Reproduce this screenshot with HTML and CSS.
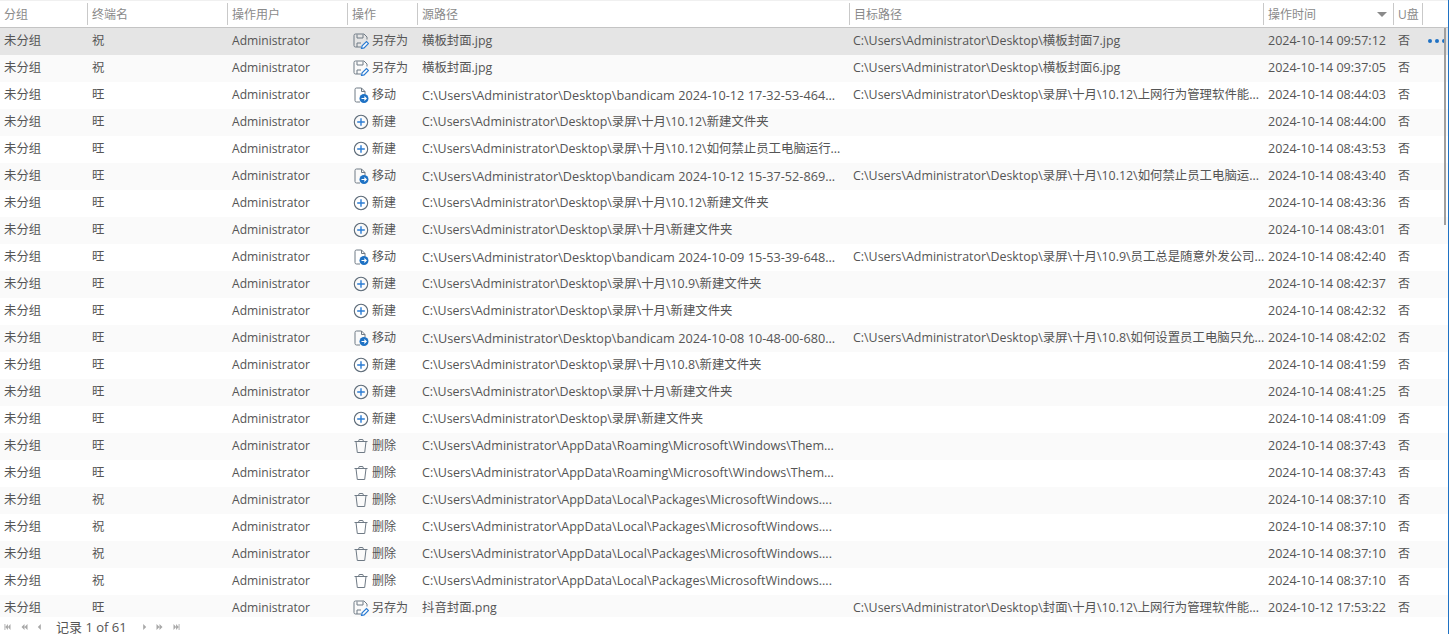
FILE: index.html
```html
<!DOCTYPE html>
<html lang="zh-CN">
<head>
<meta charset="utf-8">
<title>文件操作记录</title>
<link rel="stylesheet" href="styles.css">
</head>
<body>
<svg class="defs" width="0" height="0" aria-hidden="true">
  <symbol id="i-save" viewBox="0 0 16 16">
    <path d="M8 14H2.500A1.500 1.500 0 0 1 1 12.500V2.500A1.500 1.500 0 0 1 2.500 1H11l3 3v2.500" fill="none" stroke="#6f7a85" stroke-width="1"/>
    <path d="M4 1.500V5h6V1.500M4 14v-4h4" fill="none" stroke="#6f7a85" stroke-width="1"/>
    <path d="M8.500 15.500l.6-2.600L13.500 8.500l2 2-4.400 4.400z" fill="#fff" stroke="#2b7cd3" stroke-width="1.200"/>
  </symbol>
  <symbol id="i-move" viewBox="0 0 16 16">
    <path d="M7 15H3.500A1.500 1.500 0 0 1 2 13.500V2.500A1.500 1.500 0 0 1 3.500 1H8.500L12 4.500V7" fill="none" stroke="#6f7a85"/>
    <path d="M8.500 1v3.500H12" fill="none" stroke="#6f7a85"/>
    <circle cx="11" cy="11.500" r="4.500" fill="#1f72c4"/>
    <path d="M8.500 11.500h4.500M11.300 9.700l1.900 1.800-1.900 1.800" fill="none" stroke="#fff" stroke-width="1.100"/>
  </symbol>
  <symbol id="i-new" viewBox="0 0 16 16">
    <circle cx="8" cy="8" r="6.700" fill="none" stroke="#5d6b78" stroke-width="1.100"/>
    <path d="M8 4.200v7.600M4.200 8h7.600" stroke="#2b7cd3" stroke-width="1.400"/>
  </symbol>
  <symbol id="i-del" viewBox="0 0 16 16">
    <path d="M1.500 3.500h13M5.500 3.500l.7-2h3.600l.7 2" fill="none" stroke="#6f7a85"/>
    <path d="M3 3.500l1.300 11h7.400l1.300-11" fill="none" stroke="#6f7a85"/>
  </symbol>
</svg>
<main class="grid">
  <div class="row head">
    <div class="c c1">分组</div><div class="c c2">终端名</div><div class="c c3">操作用户</div><div class="c c4">操作</div><div class="c c5">源路径</div><div class="c c6">目标路径</div><div class="c c7">操作时间<span class="sort"></span></div><div class="c c8">U盘</div>
  </div>
  <div id="rows"></div>
  <div class="pager">
    <span class="nav"><svg class="pg" viewBox="0 0 9 7"><path d="M1 0h1v7H1zM8 0v7L5 3.500zM5 0v7L2 3.500z"/></svg><svg class="pg" viewBox="0 0 9 7"><path d="M8 0v7L4.500 3.500zM4.500 0v7L1 3.500z"/></svg><svg class="pg one" viewBox="0 0 5 7"><path d="M4 0v7L.500 3.500z"/></svg></span>
    <span class="rec">记录 1 of 61</span>
    <span class="nav"><svg class="pg one" viewBox="0 0 5 7"><path d="M1 0v7l3.500-3.500z"/></svg><svg class="pg" viewBox="0 0 9 7"><path d="M1 0v7l3.500-3.500zM4.500 0v7L8 3.500z"/></svg><svg class="pg" viewBox="0 0 9 7"><path d="M7 0h1v7H7zM1 0v7l3-3.500zM4 0v7l3-3.500z"/></svg></span>
  </div>
  <div class="more"><i></i><i></i><i></i></div>
  <div class="thumb"></div>
  <div class="edge"></div>
</main>
<script src="app.js"></script>
</body>
</html>
```
FILE: styles.css
```css
* { box-sizing: border-box; }
html, body { margin: 0; padding: 0; height: 100%; overflow: hidden; background: #fff; }
body { font: 12.4px/26px "Open Sans", "Noto Sans CJK SC", sans-serif; color: #555; }
.defs { position: absolute; }
.grid { position: relative; height: 634px; overflow: hidden; }
.row { display: flex; height: 27px; }
.row:nth-child(even) { background: #fafafa; }
.row.sel { background: #e5e5e5; }
.c { flex: none; padding-left: 4px; white-space: nowrap; }
.c1 { width: 88px; }
.c2 { width: 140px; }
.c3 { width: 120px; font-size: 12.1px; }
.c4 { width: 70px; padding-left: 5px; padding-bottom: 1px; display: flex; align-items: center; gap: 3px; font-size: 12px; }
.c5 { width: 432px; }
.op-m .c5 { font-size: 12.7px; }
.op-d .c5 { font-size: 12.55px; }
.c6 { width: 414px; padding-left: 3px; }
.c7 { width: 130px; font-size: 12.500px; }
.c8 { width: 30px; font-size: 12px; }
.head { height: 28px; background: #fff; border-top: 1px solid #f0f0f0; border-bottom: 1px solid #c4c4c4; color: #8a8a8a; padding-top: 2px; line-height: 24px; }
.head .c { height: 22px; border-left: 1px solid #c9c9c9; display: block; padding-left: 4px; font-size: 12px; }
.head .c1 { width: 87px; border-left: 0; }
.head .c6 { padding-left: 4px; }
.head .c8 { border-right: 1px solid #c9c9c9; }
.head .c7 { position: relative; }
.sort { position: absolute; right: 6px; top: 9px; border: 5px solid transparent; border-top: 5px solid #8a8a8a; border-bottom: 0; }
.ico { width: 16px; height: 16px; flex: none; }
.pager { position: relative; height: 17px; margin-top: -5px; padding: 3px 0 0 3px; display: flex; align-items: center; background: #fff; line-height: 14px; color: #555; font-size: 13px; }
.nav { display: flex; align-items: center; gap: 8px; }
.pg { height: 6px; width: 9px; fill: #a8a8a8; }
.pg.one { width: 5px; }
.rec { margin: 0 15px 0 14px; }
.more { position: absolute; left: 1428px; top: 39px; display: flex; gap: 3px; }
.more i { width: 4px; height: 4px; border-radius: 50%; background: #1f72c4; }
.thumb { position: absolute; left: 1444px; top: 28px; width: 2px; height: 197px; background: #a0a0a0; }
.edge { position: absolute; left: 1448px; top: 0; width: 1px; height: 634px; background: #1f72c4; }
```
FILE: app.js
```js
const A='C:\\Users\\Administrator\\Desktop\\', R=A+'录屏\\十月\\', P='C:\\Users\\Administrator\\AppData\\';
const O={s:['i-save','另存为'],m:['i-move','移动'],n:['i-new','新建'],d:['i-del','删除']};
const T=P+'Roaming\\Microsoft\\Windows\\Them...', L=P+'Local\\Packages\\MicrosoftWindows....';
const data=[
['祝','s','横板封面.jpg',A+'横板封面7.jpg','2024-10-14 09:57:12'],
['祝','s','横板封面.jpg',A+'横板封面6.jpg','2024-10-14 09:37:05'],
['旺','m',A+'bandicam 2024-10-12 17-32-53-464...',R+'10.12\\上网行为管理软件能...','2024-10-14 08:44:03'],
['旺','n',R+'10.12\\新建文件夹','','2024-10-14 08:44:00'],
['旺','n',R+'10.12\\如何禁止员工电脑运行...','','2024-10-14 08:43:53'],
['旺','m',A+'bandicam 2024-10-12 15-37-52-869...',R+'10.12\\如何禁止员工电脑运...','2024-10-14 08:43:40'],
['旺','n',R+'10.12\\新建文件夹','','2024-10-14 08:43:36'],
['旺','n',R+'新建文件夹','','2024-10-14 08:43:01'],
['旺','m',A+'bandicam 2024-10-09 15-53-39-648...',R+'10.9\\员工总是随意外发公司...','2024-10-14 08:42:40'],
['旺','n',R+'10.9\\新建文件夹','','2024-10-14 08:42:37'],
['旺','n',R+'新建文件夹','','2024-10-14 08:42:32'],
['旺','m',A+'bandicam 2024-10-08 10-48-00-680...',R+'10.8\\如何设置员工电脑只允...','2024-10-14 08:42:02'],
['旺','n',R+'10.8\\新建文件夹','','2024-10-14 08:41:59'],
['旺','n',R+'新建文件夹','','2024-10-14 08:41:25'],
['旺','n',A+'录屏\\新建文件夹','','2024-10-14 08:41:09'],
['旺','d',T,'','2024-10-14 08:37:43'],
['旺','d',T,'','2024-10-14 08:37:43'],
['祝','d',L,'','2024-10-14 08:37:10'],
['祝','d',L,'','2024-10-14 08:37:10'],
['祝','d',L,'','2024-10-14 08:37:10'],
['祝','d',L,'','2024-10-14 08:37:10'],
['旺','s','抖音封面.png',A+'封面\\十月\\10.12\\上网行为管理软件能...','2024-10-12 17:53:22']
];
document.getElementById('rows').innerHTML=data.map((d,i)=>{
 const o=O[d[1]];
 return `<div class="row op-${d[1]}${i===0?' sel':''}"><div class="c c1">未分组</div><div class="c c2">${d[0]}</div><div class="c c3">Administrator</div><div class="c c4"><svg class="ico"><use href="#${o[0]}"/></svg>${o[1]}</div><div class="c c5">${d[2]}</div><div class="c c6">${d[3]}</div><div class="c c7">${d[4]}</div><div class="c c8">否</div></div>`;
}).join('');
```
